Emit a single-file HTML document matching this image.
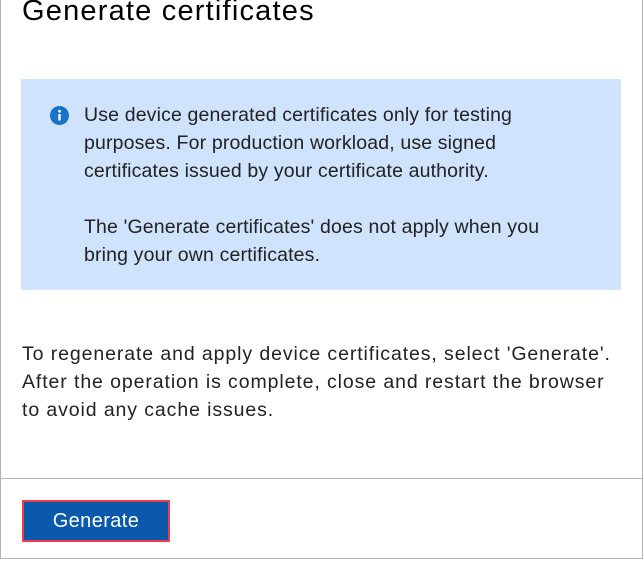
<!DOCTYPE html>
<html><head><style>
html,body{margin:0;padding:0;background:#fff;}
body{width:644px;height:561px;position:relative;overflow:hidden;font-family:"Liberation Sans",sans-serif;color:#1b1b1b;}
.frame{position:absolute;left:0;top:0;width:641px;height:558px;border:1px solid #b4b4b4;border-top:none;}
h1{position:absolute;left:22px;top:-5px;margin:0;font-weight:400;font-size:29px;color:#000;letter-spacing:1.2px;}
.info{position:absolute;left:21px;top:79px;width:600px;height:211px;background:#cfe3fc;}
.info svg{position:absolute;left:29px;top:27px;}
.info .t{position:absolute;left:63px;top:22px;font-size:19.5px;line-height:28px;color:#222;white-space:nowrap;letter-spacing:0.15px;}
.p{position:absolute;left:22px;top:340px;font-size:19.5px;line-height:28px;color:#222;white-space:nowrap;letter-spacing:0.9px;}
.div{position:absolute;left:0;top:478px;width:643px;height:1px;background:#b4b4b4;}
.btn{position:absolute;left:22px;top:500px;width:144px;height:38px;background:#0a59ac;border:2px solid #ee3b47;color:#fff;font-size:20px;text-align:center;line-height:38px;letter-spacing:0.4px;}
</style></head><body>
<div class="frame"></div>
<h1>Generate certificates</h1>
<div class="info">
<svg width="19" height="19" viewBox="0 0 19 19"><circle cx="9.5" cy="9.5" r="9.5" fill="#1573c9"/><rect x="8.3" y="8" width="2.4" height="6.5" fill="#fff"/><circle cx="9.5" cy="5.3" r="1.4" fill="#fff"/></svg>
<div class="t">Use device generated certificates only for testing<br>purposes. For production workload, use signed<br>certificates issued by your certificate authority.<br><br>The 'Generate certificates' does not apply when you<br>bring your own certificates.</div>
</div>
<div class="p">To regenerate and apply device certificates, select 'Generate'.<br>After the operation is complete, close and restart the browser<br>to avoid any cache issues.</div>
<div class="div"></div>
<div class="btn">Generate</div>
</body></html>
